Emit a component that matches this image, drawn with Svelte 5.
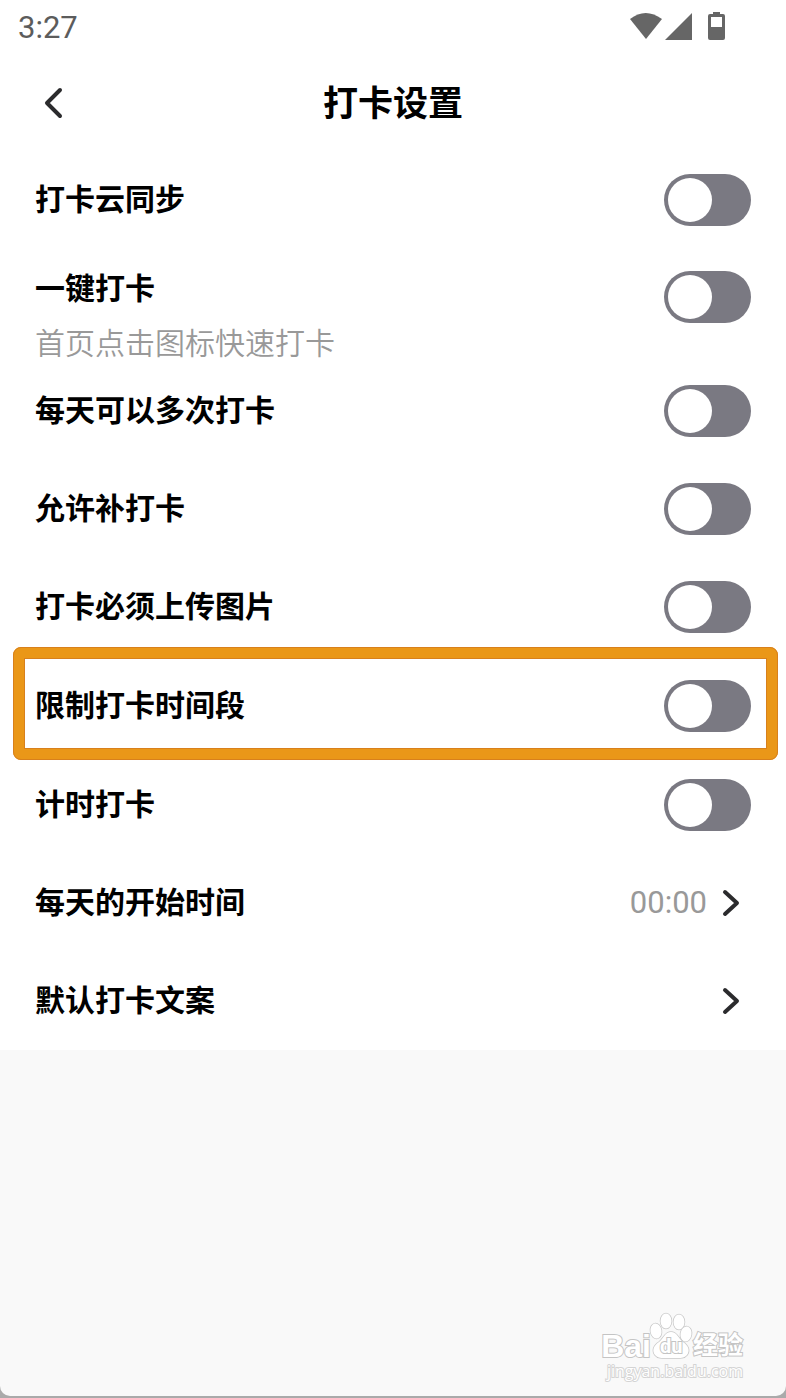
<script>
  let settings = [
    { id: "sync", label: "打卡云同步", on: false },
    { id: "quick", label: "一键打卡", hint: "首页点击图标快速打卡", on: false },
    { id: "multiple", label: "每天可以多次打卡", on: false },
    { id: "makeup", label: "允许补打卡", on: false },
    { id: "photo", label: "打卡必须上传图片", on: false },
    { id: "period", label: "限制打卡时间段", on: false, marked: true },
    { id: "timer", label: "计时打卡", on: false },
  ];

  let links = [
    { label: "每天的开始时间", value: "00:00" },
    { label: "默认打卡文案", value: "" },
  ];
</script>

<div class="screen">
  <div class="panel">
    <div class="status">
      <span>3:27</span>
      <svg width="97" height="30" viewBox="0 0 97 30" fill="#666" aria-hidden="true">
        <path d="M1 7Q16.500 -5 33 7L17 27Z" />
        <path d="M63 1V28H36Z" />
        <path
          fill-rule="evenodd"
          d="M84 0h7v2h3q2 0 2 2v22q0 2-2 2H81q-2 0-2-2V4q0-2 2-2h3zM82 5v10h11v-10z"
        />
      </svg>
    </div>

    <header>
      <button class="back" aria-label="返回">
        <svg width="20" height="34" viewBox="0 0 20 34" aria-hidden="true">
          <path d="M16 4L3 17L16 30" />
        </svg>
      </button>
      <h1>打卡设置</h1>
    </header>

    <main>
      {#each settings as item}
        <div class="row" class:tall={item.hint} class:marked={item.marked}>
          <label for={item.id}>
            {item.label}
            {#if item.hint}
              <small>{item.hint}</small>
            {/if}
          </label>
          <input id={item.id} type="checkbox" role="switch" bind:checked={item.on} />
        </div>
      {/each}

      {#each links as link}
        <button class="row link">
          <span>{link.label}</span>
          <span class="value">{link.value}</span>
          <svg width="18" height="28" viewBox="0 0 18 28" aria-hidden="true">
            <path d="M3 3L15 14L3 25" />
          </svg>
        </button>
      {/each}
    </main>

    <footer>
      <div class="brand">
        <span class="bai">Bai</span>
        <span class="paw">
          <svg width="42" height="48" viewBox="0 0 42 48" aria-hidden="true">
            <ellipse cx="15" cy="9" rx="5.500" ry="7.500" />
            <ellipse cx="28" cy="10" rx="5.500" ry="7.500" />
            <ellipse cx="5" cy="19" rx="5.500" ry="7.500" transform="rotate(-10 5 19)" />
            <ellipse cx="35" cy="22" rx="5.500" ry="7.500" transform="rotate(10 35 22)" />
            <path
              d="M20 20C26 20 27 26 32 30C38 34 39 39 36 43C33 47 27 46 20 46C13 46 7 47 4 43C1 39 2 34 8 30C13 26 14 20 20 20Z"
            />
          </svg>
          <span class="du">du</span>
        </span>
        <span class="cn">经验</span>
      </div>
      <div class="site">jingyan.baidu.com</div>
    </footer>
  </div>
</div>

<style>
  :global(body) {
    margin: 0;
  }

  .screen {
    display: flex;
    box-sizing: border-box;
    min-height: 100vh;
    padding-bottom: 2px;
    background: #aaa;
    color: #000;
    font-family: Roboto, "Noto Sans CJK SC", sans-serif;
  }

  .panel {
    flex: 1;
    display: flex;
    flex-direction: column;
    background: #f9f9f9;
    border-radius: 0 0 10px 10px;
    overflow: hidden;
  }

  .status {
    display: flex;
    align-items: center;
    justify-content: space-between;
    height: 54px;
    padding: 0 60px 0 18px;
    background: #fff;
    color: #5c5c5c;
    font-size: 31px;
    font-weight: 400;
  }

  header {
    display: grid;
    grid-template-columns: 72px 1fr 72px;
    align-items: center;
    height: 97px;
    background: #fff;
  }

  h1 {
    margin: 4px 0 0;
    font-size: 35px;
    font-weight: 700;
    line-height: 48px;
    text-align: center;
  }

  button {
    border: 0;
    background: none;
    color: inherit;
    font: inherit;
    cursor: pointer;
  }

  .back {
    display: flex;
    justify-content: flex-end;
    padding: 0 8px;
  }

  button path {
    fill: none;
    stroke: #2b2b2d;
    stroke-width: 4;
    stroke-linecap: round;
    stroke-linejoin: round;
  }

  main {
    background: #fff;
  }

  .row {
    position: relative;
    display: flex;
    align-items: center;
    box-sizing: border-box;
    width: 100%;
    height: 98px;
    padding: 0 35px;
    font-size: 30px;
    font-weight: 700;
    line-height: 36px;
    text-align: left;
  }

  .row label,
  .link span:first-child {
    flex: 1;
  }

  .tall {
    align-items: flex-start;
    height: 113px;
    padding-top: 22px;
  }

  small {
    display: block;
    margin-top: 19px;
    color: #999;
    font-size: 30px;
    font-weight: 350;
  }

  .marked {
    height: 100px;
  }

  /* frame reaches past the row it points out */
  .marked::after {
    content: "";
    position: absolute;
    inset: -9px 8px -4px 13px;
    border: 11px solid #ea9718;
    border-radius: 8px;
    outline: 1px solid #d8801c;
    outline-offset: -1px;
    box-shadow: inset 0 0 0 1px #d8801c;
    pointer-events: none;
  }

  input {
    appearance: none;
    flex: none;
    box-sizing: border-box;
    width: 87px;
    height: 52px;
    margin: 0;
    padding: 4px;
    border-radius: 26px;
    background: #7a7982;
    cursor: pointer;
  }

  input::before {
    content: "";
    display: block;
    width: 44px;
    height: 44px;
    border-radius: 50%;
    background: #fff;
  }

  input:checked {
    background: #ea9718;
  }

  input:checked::before {
    margin-left: auto;
  }

  .link {
    padding-right: 46px;
  }

  .value {
    margin-right: 15px;
    color: #999;
    font-size: 31px;
    font-weight: 400;
  }

  footer {
    align-self: flex-end;
    margin-top: auto;
    padding: 32px 43px 16px 0;
    color: #fff;
    -webkit-text-stroke: 2px #c4c4c4;
    paint-order: stroke fill;
  }

  .brand {
    display: flex;
    align-items: flex-end;
    justify-content: space-between;
    line-height: 28px;
    font-weight: 700;
  }

  .bai {
    font-family: "Liberation Sans", sans-serif;
    font-size: 32px;
    line-height: 28px;
  }

  .cn {
    font-size: 25px;
  }

  .paw {
    position: relative;
    height: 48px;
  }

  .paw svg {
    display: block;
    overflow: visible;
    fill: #fff;
    stroke: #c8c8c8;
    stroke-width: 1.500;
  }

  .du {
    position: absolute;
    bottom: 4px;
    left: 9px;
    font-size: 20px;
    line-height: 20px;
  }

  .site {
    margin-top: 2px;
    font-family: "Open Sans", sans-serif;
    font-size: 16px;
    line-height: 18px;
    text-align: right;
    -webkit-text-stroke-color: #d4d4d4;
  }
</style>
